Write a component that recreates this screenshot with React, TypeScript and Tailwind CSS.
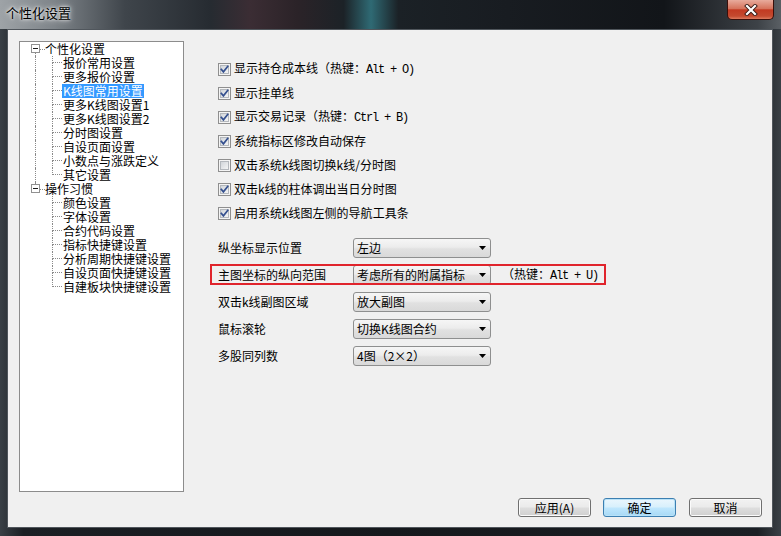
import React from "react";

const CJK = "font-['Noto_Sans_CJK_SC',sans-serif] text-[12px] leading-[14px] text-black";
const MONO = "font-['Liberation_Mono',monospace] text-[12px] tracking-[-1.2px]";

function Check({ checked }: { checked: boolean }) {
  return (
    <svg width="13" height="13" viewBox="0 0 13 13" className="shrink-0">
      <defs>
        <linearGradient id="cbg" x1="0" y1="0" x2="1" y2="1">
          <stop offset="0" stopColor="#cfd3d8" />
          <stop offset="1" stopColor="#f7f7f7" />
        </linearGradient>
      </defs>
      <rect x="0.5" y="0.5" width="12" height="12" fill="#f4f4f4" stroke="#8f8f8f" />
      <rect x="2.5" y="2.5" width="8" height="8" fill="url(#cbg)" stroke="#b4b8bd" />
      {checked && (
        <path d="M3.3 6.4 L5.4 8.8 L9.7 3.4" fill="none" stroke="#35508f" strokeWidth="1.7" strokeLinecap="square" />
      )}
    </svg>
  );
}

function CheckRow({ checked, text, hot }: { checked: boolean; text: string; hot?: string }) {
  return (
    <div className="h-[24px] flex items-center gap-[3px]">
      <Check checked={checked} />
      <span className={CJK + " whitespace-nowrap"}>
        {text}
        {hot && (
          <>
            （热键：<span className={MONO}>{hot}</span>
          </>
        )}
      </span>
    </div>
  );
}

function Combo({ value }: { value: string }) {
  return (
    <div className="w-[138px] h-[20px] shrink-0 rounded-[3px] border border-[#8e8f8f] bg-[linear-gradient(#f6f6f6_0%,#ececec_45%,#e1e1e1_55%,#d9d9d9_100%)] flex items-center pl-[3px] pr-[4px]">
      <span className={CJK + " flex-1 whitespace-nowrap"}>{value}</span>
      <svg width="7" height="4" viewBox="0 0 7 4">
        <path d="M0 0 H7 L3.5 4 Z" fill="#000" />
      </svg>
    </div>
  );
}

function ComboRow({ label, value, hot, boxed }: { label: string; value: string; hot?: string; boxed?: boolean }) {
  return (
    <div className="relative h-[27px] flex items-center">
      <span className={CJK + " w-[135px] shrink-0 whitespace-nowrap"}>{label}</span>
      <Combo value={value} />
      {hot && (
        <span className={CJK + " ml-[11px] whitespace-nowrap"}>
          （热键：<span className={MONO}>{hot}</span>
        </span>
      )}
      {boxed && (
        <div className="absolute left-[-8px] top-[3px] w-[396px] h-[21px] border-2 border-[#e0242c] pointer-events-none" />
      )}
    </div>
  );
}

const LINE = "border-[#8a8a8a] border-dotted";

function RootRow({ label, first }: { label: string; first: boolean }) {
  return (
    <div className="h-[14px] flex">
      <div className="w-[11px] shrink-0" />
      <div className="w-[9px] shrink-0 flex flex-col">
        <div className={"h-[2px] ml-[4px] " + (first ? "" : "border-l " + LINE)} />
        <div className="h-[9px] w-[9px] border border-[#919191] bg-white flex items-center justify-center">
          <div className="w-[5px] h-[1px] bg-[#1a1a1a]" />
        </div>
        <div className={"h-[3px] ml-[4px] " + (first ? "border-l " + LINE : "")} />
      </div>
      <div className="w-[5px] shrink-0 flex items-center">
        <div className={"w-full border-t " + LINE} />
      </div>
      <span className={CJK + " whitespace-nowrap"}>{label}</span>
    </div>
  );
}

function ChildRow({ label, trunk, last, selected }: { label: string; trunk: boolean; last: boolean; selected?: boolean }) {
  return (
    <div className="h-[14px] flex">
      <div className="w-[15px] shrink-0" />
      <div className={"w-[17px] shrink-0 " + (trunk ? "border-l " + LINE : "")} />
      <div className="w-[10px] shrink-0 flex flex-col">
        <div className={"h-[7px] border-l border-b " + LINE} />
        <div className={"h-[7px] " + (last ? "" : "border-l " + LINE)} />
      </div>
      <span
        className={
          "font-['Noto_Sans_CJK_SC',sans-serif] text-[12px] leading-[14px] px-[1px] whitespace-nowrap " +
          (selected ? "bg-[#3399ff] text-white" : "text-black")
        }
      >
        {label}
      </span>
    </div>
  );
}

const group1 = ["报价常用设置", "更多报价设置", "K线图常用设置", "更多K线图设置1", "更多K线图设置2", "分时图设置", "自设页面设置", "小数点与涨跌定义", "其它设置"];
const group2 = ["颜色设置", "字体设置", "合约代码设置", "指标快捷键设置", "分析周期快捷键设置", "自设页面快捷键设置", "自建板块快捷键设置"];

function Button({ label, primary, ml }: { label: string; primary?: boolean; ml: string }) {
  return (
    <div
      className={
        ml +
        " w-[73px] h-[19px] rounded-[3px] border flex items-center justify-center " +
        (primary
          ? "border-[#3c7fb1] bg-[linear-gradient(#eaf6fd_0%,#d9f0fc_45%,#bee6fd_55%,#a7d9f5_100%)] shadow-[inset_0_0_0_1px_#b9e2f8]"
          : "border-[#707070] bg-[linear-gradient(#f2f2f2_0%,#ebebeb_45%,#dddddd_55%,#cfcfcf_100%)] shadow-[inset_0_0_0_1px_#fbfbfb]")
      }
    >
      <span className={CJK}>{label}</span>
    </div>
  );
}

export default function App() {
  return (
    <div className="w-[781px] h-[536px] flex flex-col overflow-hidden bg-[linear-gradient(90deg,#3a4046_0%,#1b1f24_3%,#15181c_50%,#1b1f24_97%,#3a4046_100%)]">
      {/* title bar */}
      <div className="h-[29px] shrink-0 flex items-start bg-[linear-gradient(90deg,#9ea3a7_0%,#7e8489_7%,#3f454b_16%,#262b31_27%,#3b2d34_32%,#2b2328_38%,#1c2227_44%,#2f6a74_47.5%,#1b2126_51%,#181c21_65%,#121519_85%,#3d4247_97%,#5a5f64_100%)]">
        <span className="ml-[6px] mt-[5px] font-['Noto_Sans_CJK_SC',sans-serif] text-[13px] leading-[16px] text-black [text-shadow:0_0_6px_#ffffff,0_0_3px_#ffffff]">
          个性化设置
        </span>
        <div className="ml-auto mr-[7px] w-[47px] h-[20px] rounded-b-[5px] border border-t-0 border-[#3a0f0a] bg-[linear-gradient(#e8ab9c_0%,#d6735c_45%,#c23a22_52%,#c44a2f_85%,#dd7a5e_100%)] flex items-center justify-center">
          <svg width="14" height="12" viewBox="0 0 14 12">
            <path d="M3 2 L11 10 M11 2 L3 10" stroke="#3a1a14" strokeWidth="4" strokeLinecap="square" />
            <path d="M3 2 L11 10 M11 2 L3 10" stroke="#ffffff" strokeWidth="2.2" strokeLinecap="square" />
          </svg>
        </div>
      </div>

      {/* client */}
      <div className="ml-[7px] w-[766px] h-[499px] bg-[#f0f0f0] border border-[#50565c] flex flex-col">
        <div className="flex items-start pt-[11px]">
          <div className="ml-[11px] w-[165px] h-[451px] shrink-0 bg-white border border-[#8c8c8c]">
            <RootRow label="个性化设置" first={true} />
            {group1.map((c, i) => (
              <ChildRow key={c} label={c} trunk={true} last={i === group1.length - 1} selected={i === 2} />
            ))}
            <RootRow label="操作习惯" first={false} />
            {group2.map((c, i) => (
              <ChildRow key={c} label={c} trunk={false} last={i === group2.length - 1} />
            ))}
          </div>

          <div className="ml-[34px] mt-[16px] flex flex-col">
            <CheckRow checked={true} text="显示持仓成本线" hot="Alt + O)" />
            <CheckRow checked={true} text="显示挂单线" />
            <CheckRow checked={true} text="显示交易记录" hot="Ctrl + B)" />
            <CheckRow checked={true} text="系统指标区修改自动保存" />
            <CheckRow checked={false} text="双击系统k线图切换k线/分时图" />
            <CheckRow checked={true} text="双击k线的柱体调出当日分时图" />
            <CheckRow checked={true} text="启用系统k线图左侧的导航工具条" />

            <div className="mt-[9px] flex flex-col">
              <ComboRow label="纵坐标显示位置" value="左边" />
              <ComboRow label="主图坐标的纵向范围" value="考虑所有的附属指标" hot="Alt + U)" boxed={true} />
              <ComboRow label="双击k线副图区域" value="放大副图" />
              <ComboRow label="鼠标滚轮" value="切换K线图合约" />
              <ComboRow label="多股同列数" value="4图（2×2）" />
            </div>
          </div>
        </div>

        <div className="mt-[6px] flex">
          <Button label="应用(A)" ml="ml-[510px]" />
          <Button label="确定" primary={true} ml="ml-[12px]" />
          <Button label="取消" ml="ml-[13px]" />
        </div>
      </div>
    </div>
  );
}
